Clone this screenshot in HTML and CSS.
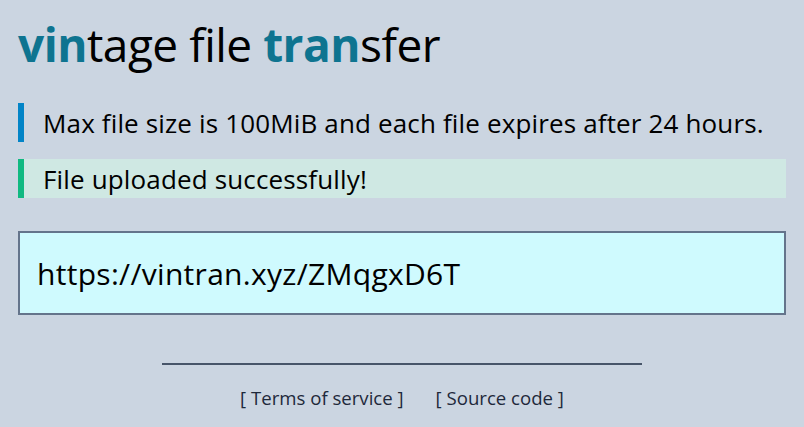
FILE: index.html
```html
<!DOCTYPE html>
<html>
<head>
<meta charset="utf-8">
<link rel="stylesheet" href="styles.css">
</head>
<body>
<main class="page">
  <h1 class="title"><span class="hl">vin</span>tage file <span class="hl">tran</span>sfer</h1>
  <div class="note note-info">Max file size is 100MiB and each file expires after 24 hours.</div>
  <div class="note note-success">File uploaded successfully!</div>
  <div class="result">https://vintran.xyz/ZMqgxD6T</div>
  <footer class="footer">
    <hr class="rule">
    <nav class="links">
      <a class="link" href="#">[ Terms of service ]</a>
      <a class="link" href="#">[ Source code ]</a>
    </nav>
  </footer>
</main>
</body>
</html>
```
FILE: styles.css
```css
html, body {
  margin: 0;
  padding: 0;
  background: #cbd5e1;
}
body {
  font-family: "Open Sans", "Noto Sans", sans-serif;
  color: #000;
}
.page {
  padding: 0 18px;
  display: flex;
  flex-direction: column;
}
.title {
  margin: 14px 0 0 0;
  font-size: 46px;
  font-weight: 400;
  line-height: 60px;
  letter-spacing: -0.5px;
}
.hl {
  color: #0e7490;
  font-weight: 700;
}
.note {
  border-left: 6px solid;
  padding: 0 0 0 19px;
  height: 39px;
  display: flex;
  align-items: center;
  font-size: 26px;
  letter-spacing: 0.15px;
}
.note-info {
  margin-top: 29px;
  border-color: #0284c7;
}
.note-success {
  margin-top: 17px;
  border-color: #10b981;
  background: #cfe8e3;
}
.result {
  margin-top: 33px;
  height: 80px;
  border: 2px solid #64748b;
  background: #cffafe;
  display: flex;
  align-items: center;
  padding-left: 17px;
  font-size: 30px;
  letter-spacing: 0.3px;
}
.footer {
  display: flex;
  flex-direction: column;
  align-items: center;
}
.rule {
  width: 480px;
  margin: 48px 0 0 0;
  border: 0;
  border-top: 2px solid #475569;
}
.links {
  margin-top: 20px;
  display: flex;
  gap: 32px;
  font-size: 18.6px;
}
.link {
  color: #1e293b;
  text-decoration: none;
}
```
